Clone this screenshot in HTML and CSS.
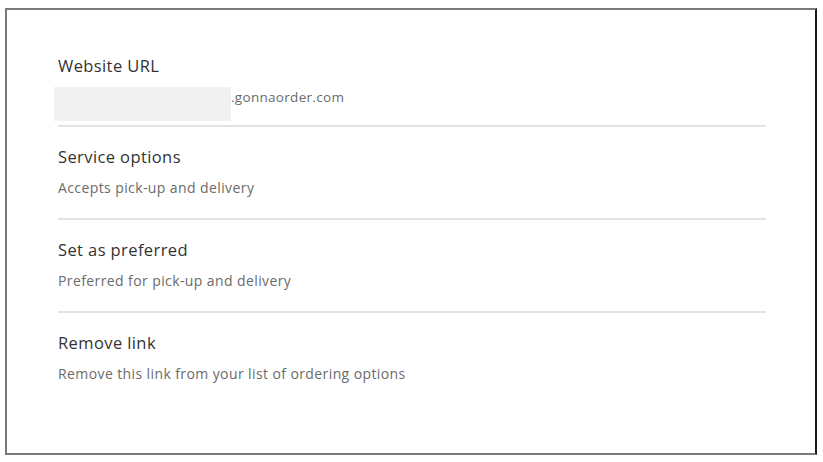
FILE: index.html
```html
<!DOCTYPE html>
<html>
<head>
<meta charset="utf-8">
<link rel="stylesheet" href="styles.css">
</head>
<body>
<div class="panel">
  <div class="row first">
    <div class="title">Website URL</div>
    <div class="url">
      <span class="mask"></span><span class="domain">.gonnaorder.com</span>
    </div>
  </div>
  <div class="row">
    <div class="title">Service options</div>
    <div class="sub">Accepts pick-up and delivery</div>
  </div>
  <div class="row">
    <div class="title">Set as preferred</div>
    <div class="sub">Preferred for pick-up and delivery</div>
  </div>
  <div class="row last">
    <div class="title">Remove link</div>
    <div class="sub">Remove this link from your list of ordering options</div>
  </div>
</div>
</body>
</html>
```
FILE: styles.css
```css
html, body {
  margin: 0;
  padding: 0;
  background: #ffffff;
}
body {
  padding: 8px 6px 7px 5px;
  font-family: "Open Sans", "Noto Sans", sans-serif;
}
.panel {
  box-sizing: border-box;
  height: 447px;
  border: 2px solid #7a7a7a;
  border-right-color: #1a1a1a;
  padding: 0 49px 0 51px;
  background: #fff;
}
.row {
  padding: 20px 0 20px 0;
  border-bottom: 2px solid #e3e3e3;
}
.row.first {
  padding-top: 46px;
  padding-bottom: 4px;
}
.row.last {
  border-bottom: none;
}
.title {
  font-size: 16.5px;
  letter-spacing: 0.4px;
  line-height: 20px;
  color: #333333;
  margin-bottom: 11px;
}
.sub {
  font-size: 14px;
  letter-spacing: 0.4px;
  line-height: 20px;
  color: #6b6b6b;
}
.url {
  display: flex;
  align-items: flex-start;
  margin-left: -4px;
}
.mask {
  display: block;
  width: 177px;
  height: 34px;
  background: #f1f1f1;
}
.domain {
  font-size: 13.5px;
  letter-spacing: 0.3px;
  line-height: 20px;
  color: #6b6b6b;
}
```
